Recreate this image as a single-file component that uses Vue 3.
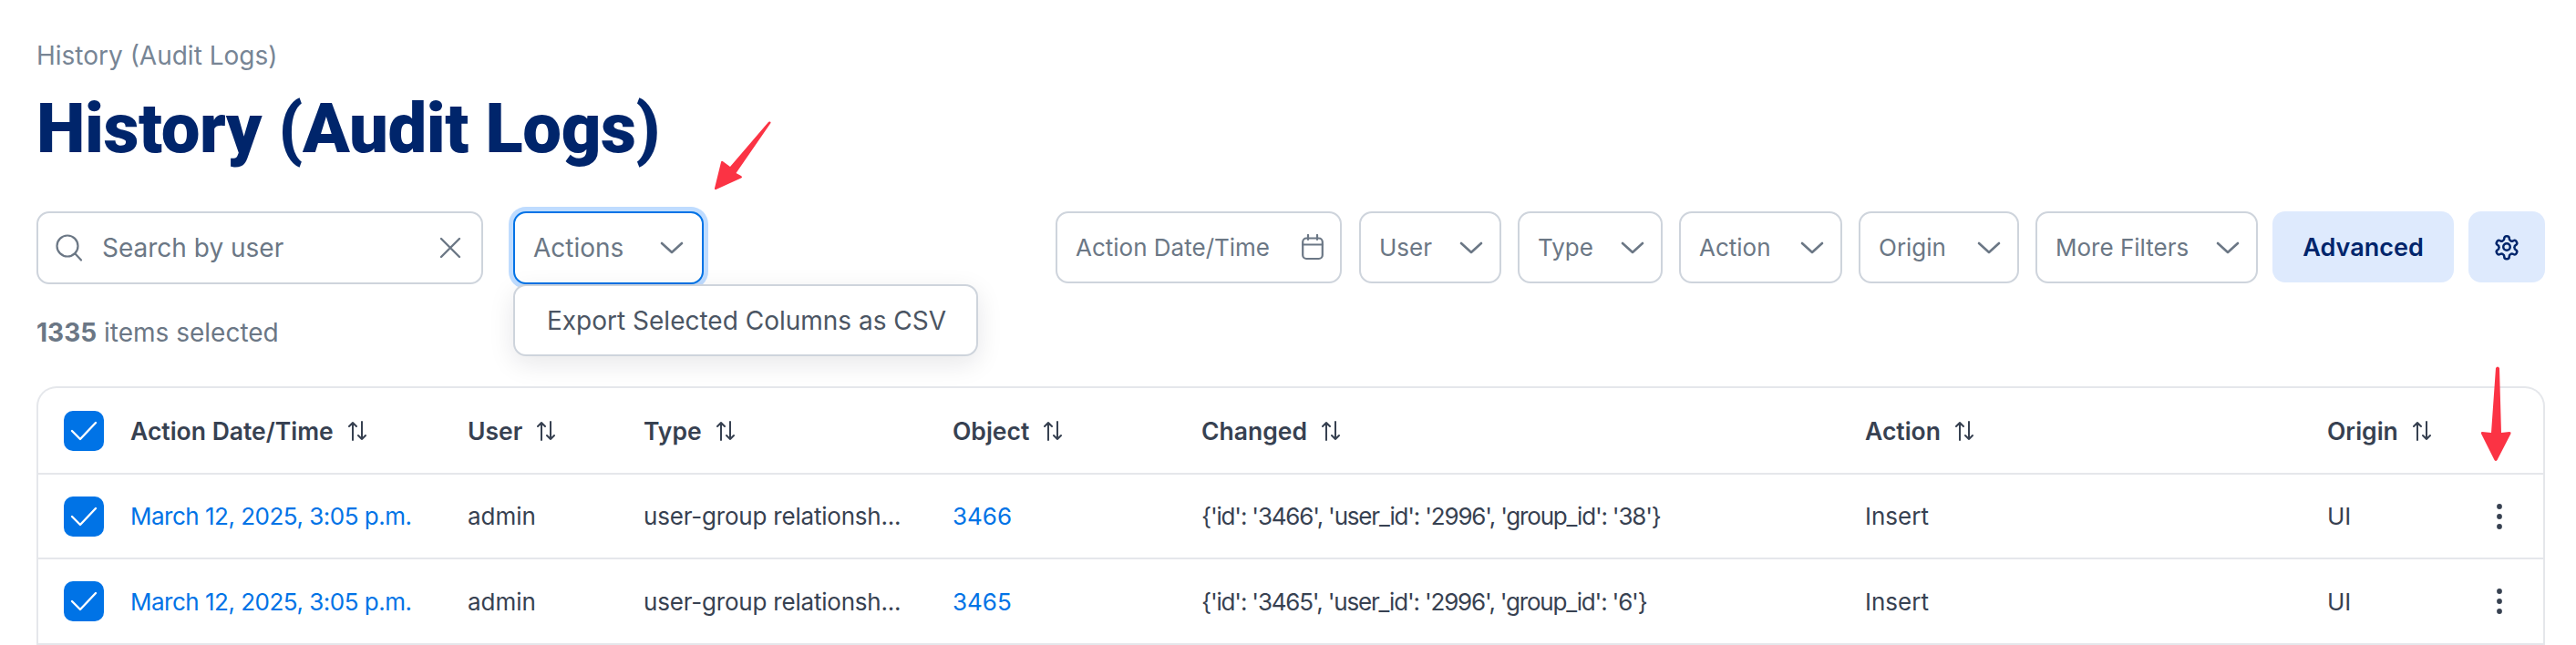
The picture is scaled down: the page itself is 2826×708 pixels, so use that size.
<script setup>
const filters = [
  { label: 'User', cls: 'w-user' },
  { label: 'Type', cls: 'w-type' },
  { label: 'Action', cls: 'w-action' },
  { label: 'Origin', cls: 'w-origin' },
  { label: 'More Filters', cls: 'w-more' }
]
const heads = ['Action Date/Time', 'User', 'Type', 'Object', 'Changed', 'Action', 'Origin']
const rows = [
  { id: '3466', changed: "{'id': '3466', 'user_id': '2996', 'group_id': '38'}" },
  { id: '3465', changed: "{'id': '3465', 'user_id': '2996', 'group_id': '6'}" }
]
</script>

<template>
  <div class="page">
    <div class="crumb">History (Audit Logs)</div>
    <h1 class="title">History (Audit Logs)</h1>

    <div class="toolbar">
      <div class="left">
        <label class="field search">
          <svg class="ico-search" width="32" height="32" viewBox="0 0 32 32" fill="none" stroke="#6b7785" stroke-width="2.2" stroke-linecap="round"><circle cx="14" cy="14" r="11.5" /><path d="M22.5 22.5 29 29.5" /></svg>
          <span class="grow">Search by user</span>
          <svg width="24" height="24" viewBox="0 0 24 24" fill="none" stroke="#6b7785" stroke-width="2.4" stroke-linecap="round"><path d="M2 2l20 20M22 2 2 22" /></svg>
        </label>
        <div class="actions-wrap">
          <button class="field actions">
            <span class="grow">Actions</span>
            <svg width="26" height="14" viewBox="0 0 26 14" fill="none" stroke="#6b7785" stroke-width="2.6" stroke-linecap="round" stroke-linejoin="round"><path d="M2 2l11 10L24 2" /></svg>
          </button>
          <div class="menu">Export Selected Columns as CSV</div>
        </div>
      </div>
      <div class="right">
        <div class="field filter w-date">
          <span class="grow">Action Date/Time</span>
          <svg width="24" height="29" viewBox="0 0 24 29" fill="none" stroke="#6b7785" stroke-width="2.2" stroke-linecap="round"><rect x="1.2" y="4.5" width="21.6" height="22.5" rx="4" /><path d="M1.2 11.5h21.6M7 1v5M17 1v5" /></svg>
        </div>
        <div v-for="f in filters" :key="f.label" class="field filter" :class="f.cls">
          <span class="grow">{{ f.label }}</span>
          <svg width="26" height="14" viewBox="0 0 26 14" fill="none" stroke="#6b7785" stroke-width="2.6" stroke-linecap="round" stroke-linejoin="round"><path d="M2 2l11 10L24 2" /></svg>
        </div>
        <button class="soft adv">Advanced</button>
        <button class="soft gear">
          <svg width="30" height="30" viewBox="0 0 24 24" fill="none" stroke="#00256b" stroke-width="2" stroke-linecap="round" stroke-linejoin="round"><path d="M12.2 2.5h-.4a2 2 0 0 0-2 2v.2a2 2 0 0 1-1 1.7l-.4.3a2 2 0 0 1-2 0l-.2-.1a2 2 0 0 0-2.7.7l-.2.4a2 2 0 0 0 .7 2.7l.2.1a2 2 0 0 1 1 1.7v.5a2 2 0 0 1-1 1.8l-.2.1a2 2 0 0 0-.7 2.7l.2.4a2 2 0 0 0 2.7.7l.2-.1a2 2 0 0 1 2 0l.4.3a2 2 0 0 1 1 1.7v.2a2 2 0 0 0 2 2h.4a2 2 0 0 0 2-2v-.2a2 2 0 0 1 1-1.7l.4-.3a2 2 0 0 1 2 0l.2.1a2 2 0 0 0 2.7-.7l.2-.4a2 2 0 0 0-.7-2.7l-.2-.1a2 2 0 0 1-1-1.8v-.5a2 2 0 0 1 1-1.7l.2-.1a2 2 0 0 0 .7-2.7l-.2-.4a2 2 0 0 0-2.7-.7l-.2.1a2 2 0 0 1-2 0l-.4-.3a2 2 0 0 1-1-1.7v-.2a2 2 0 0 0-2-2Z" /><circle cx="12" cy="12" r="3" /></svg>
        </button>
      </div>
    </div>

    <div class="count"><b>1335</b> items selected</div>

    <div class="table">
      <div class="row head">
        <span class="check"><svg width="44" height="44" viewBox="0 0 44 44" fill="none" stroke="#fff" stroke-width="2.4" stroke-linecap="round" stroke-linejoin="round"><path d="M9 22l9 9 17-18" /></svg></span>
        <span v-for="h in heads" :key="h" class="th">
          {{ h }}
          <svg class="sort" width="20" height="22" viewBox="0 0 20 22" fill="none" stroke="#374151" stroke-width="2" stroke-linecap="round" stroke-linejoin="round"><path d="M5 21V2M1 6l4-4 4 4M15 1v19M11 16l4 4 4-4" /></svg>
        </span>
        <span></span>
      </div>
      <div v-for="r in rows" :key="r.id" class="row">
        <span class="check"><svg width="44" height="44" viewBox="0 0 44 44" fill="none" stroke="#fff" stroke-width="2.4" stroke-linecap="round" stroke-linejoin="round"><path d="M9 22l9 9 17-18" /></svg></span>
        <a class="link date">March 12, 2025, 3:05 p.m.</a>
        <span>admin</span>
        <span class="trunc">user-group relationsh...</span>
        <a class="link">{{ r.id }}</a>
        <span class="changed">{{ r.changed }}</span>
        <span>Insert</span>
        <span>UI</span>
        <svg class="dots" width="8" height="30" viewBox="0 0 8 30" fill="#374151"><circle cx="4" cy="4" r="2.9" /><circle cx="4" cy="15" r="2.9" /><circle cx="4" cy="26" r="2.9" /></svg>
      </div>
    </div>

    <svg class="arrow a1" width="70" height="82" viewBox="0 0 70 82"><path d="M64 3.5 Q66 3 65.5 5 L27.5 60 L33 63 Q35 64.5 33 65.5 L5.5 78 Q3.5 78.5 4 76.5 L11 48 Q11.5 46 13.5 47.5 L21 53 L63 4 Z" fill="#fb3344" /></svg>
    <svg class="arrow a2" width="36" height="108" viewBox="0 0 36 108"><path d="M17 3 Q19 0 21 3 L23 74 L32 73 Q34 73 33.5 75 L18.5 104 Q17 106 15.5 104 L1 75 Q0.5 73 2 73 L12 74 Z" fill="#fb3344" /></svg>
  </div>
</template>

<style>
html, body { margin: 0; background: #fff; overflow: hidden; }
</style>

<style scoped>
.page {
  position: relative;
  box-sizing: border-box;
  width: 2826px;
  height: 708px;
  padding: 46px 34px 0 40px;
  font-family: Inter, "Liberation Sans", sans-serif;
  overflow: hidden;
}
.crumb {
  font-size: 28px;
  line-height: 30px;
  color: #778595;
}
.title {
  margin: 17px 0 0;
  font-family: Roboto, sans-serif;
  font-weight: 900;
  font-size: 76px;
  line-height: 96px;
  color: #00256b;
  letter-spacing: -0.4px;
}
.toolbar {
  display: flex;
  justify-content: space-between;
  height: 80px;
  margin-top: 43px;
}
.left, .right { display: flex; }
.left { gap: 33px; }
.right { gap: 18px; }
.field {
  box-sizing: border-box;
  display: flex;
  align-items: center;
  height: 80px;
  background: #fff;
  border: 2px solid #ced4dc;
  border-radius: 14px;
  color: #6b7785;
  font-size: 28px;
  font-family: inherit;
}
.grow { flex: 1; text-align: left; }
.search { width: 490px; padding: 0 22px 0 18px; gap: 20px; }
.actions-wrap { position: relative; width: 209px; }
.actions {
  width: 100%;
  padding: 0 20px 0 20px;
  border-color: #0073e6;
  box-shadow: 0 0 0 5px #bfdcff;
}
.menu {
  position: absolute;
  left: 0;
  top: 80px;
  box-sizing: border-box;
  width: 510px;
  height: 79px;
  display: flex;
  align-items: center;
  padding-left: 35px;
  background: #fff;
  border: 2px solid #ced4dc;
  border-radius: 14px;
  box-shadow: 0 8px 28px rgba(17, 24, 39, 0.1);
  color: #4b5563;
  font-size: 28px;
  white-space: nowrap;
}
.filter { font-size: 26px; padding: 0 18px 0 20px; height: 79px; }
.w-date { width: 314px; margin-right: 1px; }
.w-user { width: 156px; }
.w-type { width: 159px; }
.w-action { width: 179px; }
.w-origin { width: 176px; }
.w-more { width: 244px; }
.soft {
  display: flex;
  align-items: center;
  justify-content: center;
  height: 78px;
  border: 0;
  border-radius: 14px;
  background: #deeafd;
  color: #00256b;
  font-family: inherit;
  font-weight: 600;
  font-size: 27px;
  padding: 0;
}
.adv { width: 199px; margin-left: -2px; }
.gear { width: 84px; margin-left: -2px; }
.count {
  margin-top: 38px;
  font-size: 28px;
  line-height: 30px;
  color: #6b7785;
}
.table {
  margin-top: 44px;
  box-sizing: border-box;
  border: 2px solid #e5e7eb;
  border-bottom: 0;
  border-radius: 22px 22px 0 0;
  font-size: 26px;
  color: #374151;
}
.row {
  display: grid;
  grid-template-columns: 73px 370px 193px 339px 273px 728px 507px 185px 1fr;
  align-items: center;
  box-sizing: border-box;
  height: 94px;
  padding-left: 28px;
  border-bottom: 2px solid #e5e7eb;
}
.row:nth-child(2) { height: 93px; }
.head { height: 95px; }
.th { font-weight: 600; display: flex; align-items: center; gap: 16px; white-space: nowrap; font-size: 26.5px; }
.check {
  display: flex;
  width: 44px;
  height: 44px;
  border-radius: 10px;
  background: #0073e6;
}
.link { color: #0073e6; }
.date { letter-spacing: -0.5px; white-space: nowrap; }
.trunc { white-space: nowrap; letter-spacing: -0.2px; }
.changed { letter-spacing: -1.2px; white-space: nowrap; }
.arrow { position: absolute; }
.a1 { left: 780px; top: 130px; }
.a2 { left: 2721px; top: 401px; }
</style>
